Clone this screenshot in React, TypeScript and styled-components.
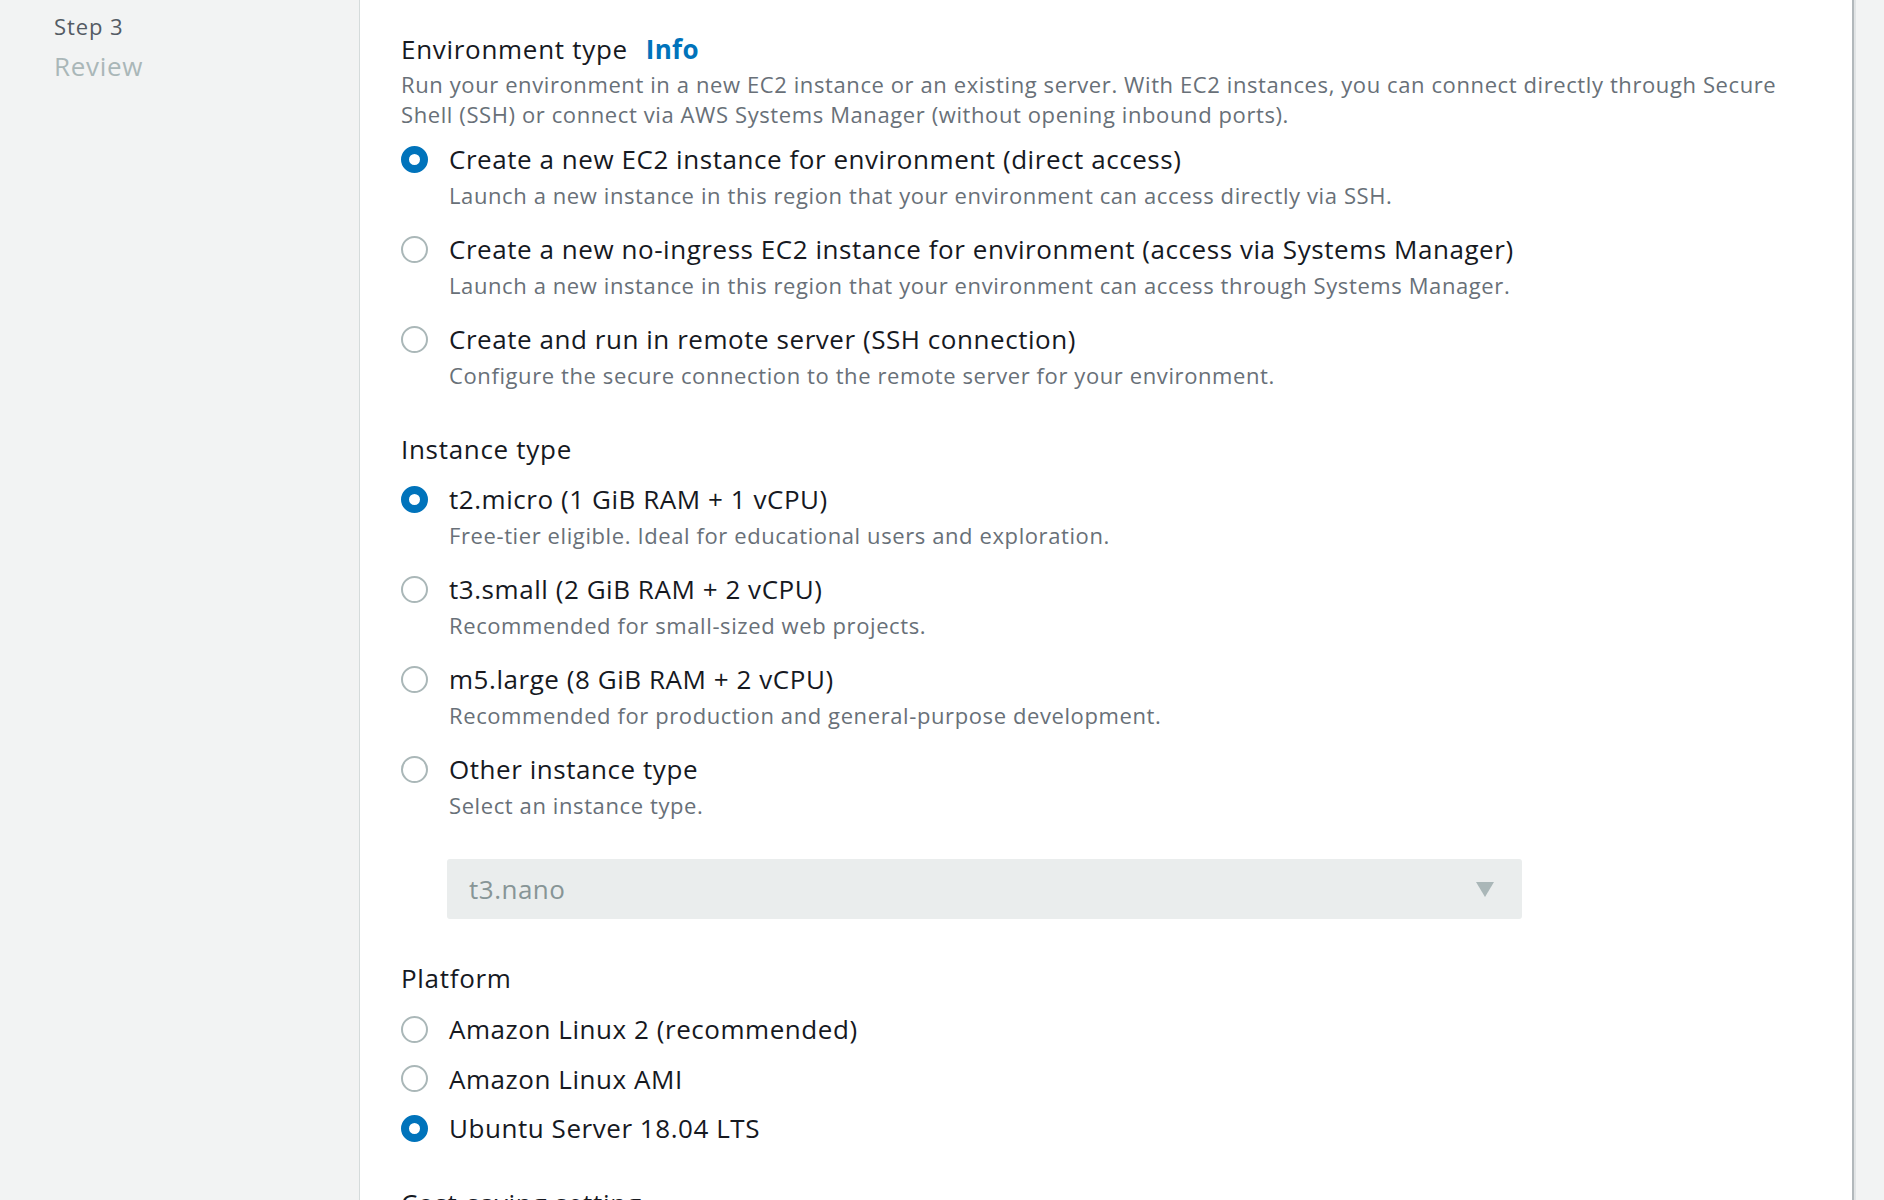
import { ReactElement } from 'react';
import styled, { createGlobalStyle } from 'styled-components';

const GlobalStyle = createGlobalStyle`
    html, body {
        margin: 0;
        padding: 0;
        background: #f2f3f3;
        font-family: "Open Sans", "Noto Sans", "Liberation Sans", sans-serif;
        color: #16191f;
    }
`;

const Page = styled.div`
    display: flex;
    height: 1200px;
    overflow: hidden;
    background: #f2f3f3;
`;

const Sidebar = styled.nav`
    width: 359px;
    flex-shrink: 0;
    padding: 11px 0 0 54px;
    box-sizing: border-box;
`;

const StepNumber = styled.div`
    font-size: 22px;
    line-height: 30px;
    letter-spacing: 0.9px;
    color: #545b64;
`;

const StepTitle = styled.div`
    font-size: 26px;
    line-height: 40px;
    letter-spacing: 0.7px;
    margin-top: 5px;
    color: #aab7b8;
`;

const Panel = styled.main`
    width: 1495px;
    flex-shrink: 0;
    background: #fff;
    border-left: 1px solid #d5dbdb;
    border-right: 2px solid #b2b8bb;
    box-shadow: 2px 0 0 #e1e4e5;
    box-sizing: border-box;
    padding: 33px 0 0 41px;
`;

const Section = styled.section`
    margin-bottom: 43px;
`;

const SectionTitle = styled.h2`
    margin: 0;
    font-size: 26px;
    line-height: 32px;
    font-weight: 400;
    letter-spacing: 0.7px;
    color: #16191f;
`;

const InfoLink = styled.a`
    margin-left: 18px;
    font-weight: 700;
    letter-spacing: 0.3px;
    color: #0073bb;
    text-decoration: none;
`;

const SectionHint = styled.p`
    margin: 4px 0 0;
    max-width: 1400px;
    font-size: 22px;
    line-height: 30px;
    letter-spacing: 0.6px;
    color: #687078;
`;

const OptionList = styled.div<{ $gap: number; $top: number }>`
    display: flex;
    flex-direction: column;
    gap: ${p => p.$gap}px;
    margin-top: ${p => p.$top}px;
`;

const Option = styled.label`
    display: grid;
    grid-template-columns: 27px 1fr;
    column-gap: 21px;
    cursor: pointer;
`;

const RadioMark = styled.span<{ $checked: boolean }>`
    width: 27px;
    height: 27px;
    margin-top: 2.5px;
    border-radius: 50%;
    box-sizing: border-box;
    background: #fff;
    border: ${p => (p.$checked ? '8.5px solid #0073bb' : '2px solid #aab7b8')};
`;

const OptionText = styled.div`
    display: flex;
    flex-direction: column;
    gap: 5px;
`;

const OptionLabel = styled.span`
    font-size: 26px;
    line-height: 32px;
    letter-spacing: 0.55px;
    color: #16191f;
`;

const OptionHint = styled.span`
    font-size: 22px;
    line-height: 30px;
    letter-spacing: 0.6px;
    color: #687078;
`;

const Select = styled.div`
    display: flex;
    align-items: center;
    justify-content: space-between;
    width: 1075px;
    height: 60px;
    margin: 39px 0 0 46px;
    padding: 0 28px 0 22px;
    box-sizing: border-box;
    background: #eaeded;
    border-radius: 3px;
    font-size: 26px;
    letter-spacing: 0.5px;
    color: #879596;
`;

type Choice = { label: string; hint?: string; checked?: boolean };

const environments: Choice[] = [
    {
        label: 'Create a new EC2 instance for environment (direct access)',
        hint: 'Launch a new instance in this region that your environment can access directly via SSH.',
        checked: true,
    },
    {
        label: 'Create a new no-ingress EC2 instance for environment (access via Systems Manager)',
        hint: 'Launch a new instance in this region that your environment can access through Systems Manager.',
    },
    {
        label: 'Create and run in remote server (SSH connection)',
        hint: 'Configure the secure connection to the remote server for your environment.',
    },
];

const instances: Choice[] = [
    {
        label: 't2.micro (1 GiB RAM + 1 vCPU)',
        hint: 'Free-tier eligible. Ideal for educational users and exploration.',
        checked: true,
    },
    { label: 't3.small (2 GiB RAM + 2 vCPU)', hint: 'Recommended for small-sized web projects.' },
    {
        label: 'm5.large (8 GiB RAM + 2 vCPU)',
        hint: 'Recommended for production and general-purpose development.',
    },
    { label: 'Other instance type', hint: 'Select an instance type.' },
];

const platforms: Choice[] = [
    { label: 'Amazon Linux 2 (recommended)' },
    { label: 'Amazon Linux AMI' },
    { label: 'Ubuntu Server 18.04 LTS', checked: true },
];

function RadioGroup({ items, gap, top }: { items: Choice[]; gap: number; top: number }): ReactElement {
    return (
        <OptionList $gap={gap} $top={top} role='radiogroup'>
            {items.map(item => (
                <Option key={item.label}>
                    <RadioMark $checked={!!item.checked} />
                    <OptionText>
                        <OptionLabel>{item.label}</OptionLabel>
                        {item.hint && <OptionHint>{item.hint}</OptionHint>}
                    </OptionText>
                </Option>
            ))}
        </OptionList>
    );
}

export default function App(): ReactElement {
    return (
        <Page>
            <GlobalStyle />
            <Sidebar>
                <StepNumber>Step 3</StepNumber>
                <StepTitle>Review</StepTitle>
            </Sidebar>

            <Panel>
                <Section>
                    <SectionTitle>
                        Environment type
                        <InfoLink href='#'>Info</InfoLink>
                    </SectionTitle>
                    <SectionHint>
                        Run your environment in a new EC2 instance or an existing server. With EC2 instances, you
                        can connect directly through Secure Shell (SSH) or connect via AWS Systems Manager (without
                        opening inbound ports).
                    </SectionHint>
                    <RadioGroup items={environments} gap={23} top={14} />
                </Section>

                <Section>
                    <SectionTitle>Instance type</SectionTitle>
                    <RadioGroup items={instances} gap={23} top={18} />
                    <Select>
                        <span>t3.nano</span>
                        <svg width='18' height='15' viewBox='0 0 18 15'>
                            <polygon points='0,0 18,0 9,15' fill='#aab7b8' />
                        </svg>
                    </Select>
                </Section>

                <Section>
                    <SectionTitle>Platform</SectionTitle>
                    <RadioGroup items={platforms} gap={17.5} top={19} />
                </Section>

                <Section>
                    <SectionTitle>Cost-saving setting</SectionTitle>
                </Section>
            </Panel>
        </Page>
    );
}
